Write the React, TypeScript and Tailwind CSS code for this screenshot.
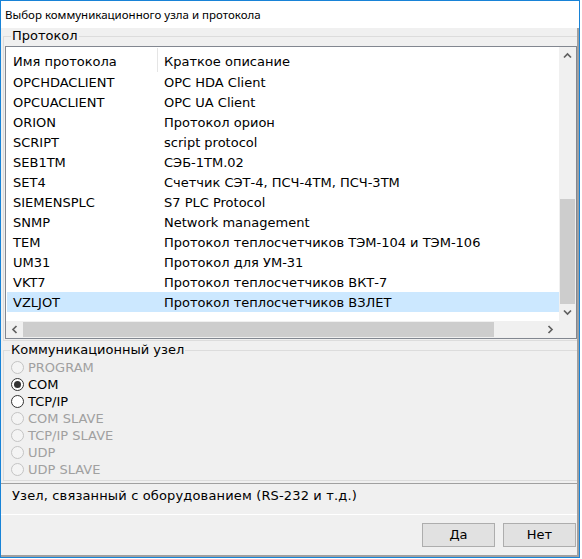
import React from 'react';

// ============================================================================
// Data
// ============================================================================

interface ProtocolRow {
  name: string;
  desc: string;
}

const PROTOCOLS: ProtocolRow[] = [
  { name: 'OPCHDACLIENT', desc: 'OPC HDA Client' },
  { name: 'OPCUACLIENT', desc: 'OPC UA Client' },
  { name: 'ORION', desc: 'Протокол орион' },
  { name: 'SCRIPT', desc: 'script protocol' },
  { name: 'SEB1TM', desc: 'СЭБ-1ТМ.02' },
  { name: 'SET4', desc: 'Счетчик СЭТ-4, ПСЧ-4ТМ, ПСЧ-3ТМ' },
  { name: 'SIEMENSPLC', desc: 'S7 PLC Protocol' },
  { name: 'SNMP', desc: 'Network management' },
  { name: 'TEM', desc: 'Протокол теплосчетчиков ТЭМ-104 и ТЭМ-106' },
  { name: 'UM31', desc: 'Протокол для УМ-31' },
  { name: 'VKT7', desc: 'Протокол теплосчетчиков ВКТ-7' },
  { name: 'VZLJOT', desc: 'Протокол теплосчетчиков ВЗЛЕТ' },
];

const SELECTED = 'VZLJOT';

const NODES = [
  { label: 'PROGRAM', enabled: false },
  { label: 'COM', enabled: true, checked: true },
  { label: 'TCP/IP', enabled: true },
  { label: 'COM SLAVE', enabled: false },
  { label: 'TCP/IP SLAVE', enabled: false },
  { label: 'UDP', enabled: false },
  { label: 'UDP SLAVE', enabled: false },
];

// ============================================================================
// Scrollbar bits
// ============================================================================

function Chevron({ dir }: { dir: 'up' | 'down' | 'left' | 'right' }) {
  const vertical = dir === 'up' || dir === 'down';
  const d = {
    up: 'M1 5.5 L4.5 2 L8 5.5',
    down: 'M1 1.5 L4.5 5 L8 1.5',
    left: 'M5.5 1 L2 4.5 L5.5 8',
    right: 'M1.5 1 L5 4.5 L1.5 8',
  }[dir];
  return (
    <svg
      width={vertical ? 9 : 7}
      height={vertical ? 7 : 9}
      viewBox={vertical ? '0 0 9 7' : '0 0 7 9'}
      fill="none"
      stroke="#606060"
      strokeWidth="1.7"
    >
      <path d={d} />
    </svg>
  );
}

function VScroll() {
  return (
    <div className="w-[17px] bg-[#f0f0f0] flex flex-col">
      <div className="h-[17px] flex items-center justify-center">
        <Chevron dir="up" />
      </div>
      <div className="flex-1 flex flex-col justify-end">
        <div className="h-[105px] mx-[1px] bg-[#cdcdcd]" />
      </div>
      <div className="h-[17px] flex items-center justify-center">
        <Chevron dir="down" />
      </div>
    </div>
  );
}

function HScroll() {
  return (
    <div className="flex-1 h-[17px] bg-[#f0f0f0] flex">
      <div className="w-[17px] flex items-center justify-center">
        <Chevron dir="left" />
      </div>
      <div className="flex-1 flex">
        <div className="w-[471px] my-[1px] bg-[#cdcdcd]" />
      </div>
      <div className="w-[17px] flex items-center justify-center">
        <Chevron dir="right" />
      </div>
    </div>
  );
}

// ============================================================================
// Radio
// ============================================================================

function Radio({ label, enabled, checked }: { label: string; enabled: boolean; checked?: boolean }) {
  return (
    <div className={`h-[17px] flex items-center pl-[7px] leading-[17px] ${enabled ? 'text-black' : 'text-[#a0a0a0]'}`}>
      <span
        className={`w-[13px] h-[13px] rounded-full border flex items-center justify-center ${
          enabled ? 'border-[#333333] bg-white' : 'border-[#c4c4c4] bg-[#f4f4f4]'
        }`}
      >
        {checked && <span className="w-[7px] h-[7px] rounded-full bg-[#333333]" />}
      </span>
      <span className="ml-[4px]">{label}</span>
    </div>
  );
}

// ============================================================================
// Dialog
// ============================================================================

export default function App() {
  return (
    <div className="w-[580px] h-[558px] border border-[#1883d7] bg-white flex flex-col font-['DejaVu_Sans',sans-serif] text-[13px] text-black">
      {/* Title bar */}
      <div className="h-[27px] shrink-0 flex items-center pl-[4px] font-['Noto_Sans',sans-serif] text-[11.5px]">
        Выбор коммуникационного узла и протокола
      </div>

      {/* Client area */}
      <div className="flex-1 bg-[#f0f0f0] border-r-2 border-b-2 border-[#a0a0a0] flex flex-col">
        {/* Протокол */}
        <fieldset className="ml-[2px] pl-[1px] pb-[1px] border-l border-t border-b border-[#dcdcdc]">
          <legend className="ml-[6px] px-[1px] leading-[16px]">Протокол</legend>
          <div className="mt-[2px] h-[293px] border border-[#828790] bg-white flex flex-col">
            <div className="flex flex-1 min-h-0">
              <div className="flex-1 min-w-0 overflow-hidden pt-[1px] pl-[1px]">
                <div className="h-[24px] flex leading-[20px]">
                  <div className="w-[151px] shrink-0 pl-[6px] pt-[4px] border-r border-[#e5e5e5]">Имя протокола</div>
                  <div className="pl-[6px] pt-[4px] whitespace-nowrap">Краткое описание</div>
                </div>
                {PROTOCOLS.map((row) => (
                  <div
                    key={row.name}
                    className={`h-[20px] flex leading-[19px] pt-[1px] whitespace-nowrap ${row.name === SELECTED ? 'bg-[#cce8ff]' : ''}`}
                  >
                    <div className="w-[151px] shrink-0 pl-[6px]">{row.name}</div>
                    <div className="pl-[6px]">{row.desc}</div>
                  </div>
                ))}
              </div>
              <VScroll />
            </div>
            <div className="flex">
              <HScroll />
              <div className="w-[17px] bg-[#f0f0f0]" />
            </div>
          </div>
        </fieldset>

        {/* Коммуникационный узел */}
        <fieldset className="mt-[1px] ml-[2px] pt-[1px] pb-[2px] border-l border-t border-b border-[#dcdcdc]">
          <legend className="ml-[6px] px-[1px] leading-[16px]">Коммуникационный узел</legend>
          {NODES.map((n) => (
            <Radio key={n.label} label={n.label} enabled={n.enabled} checked={n.checked} />
          ))}
        </fieldset>

        {/* Description */}
        <div className="mt-[2px] h-[32px] border-t border-b border-t-[#a0a0a0] border-b-white pl-[11px] pt-[2px] leading-[20px] tracking-[0.15px]">
          Узел, связанный с оборудованием (RS-232 и т.д.)
        </div>

        {/* Buttons */}
        <div className="flex justify-end gap-[8px] pt-[8px] pr-[1px]">
          <button className="w-[73px] h-[24px] bg-[#e1e1e1] border border-[#adadad] leading-[20px]">Да</button>
          <button className="w-[73px] h-[24px] bg-[#e1e1e1] border border-[#adadad] leading-[20px]">Нет</button>
        </div>
      </div>
    </div>
  );
}
